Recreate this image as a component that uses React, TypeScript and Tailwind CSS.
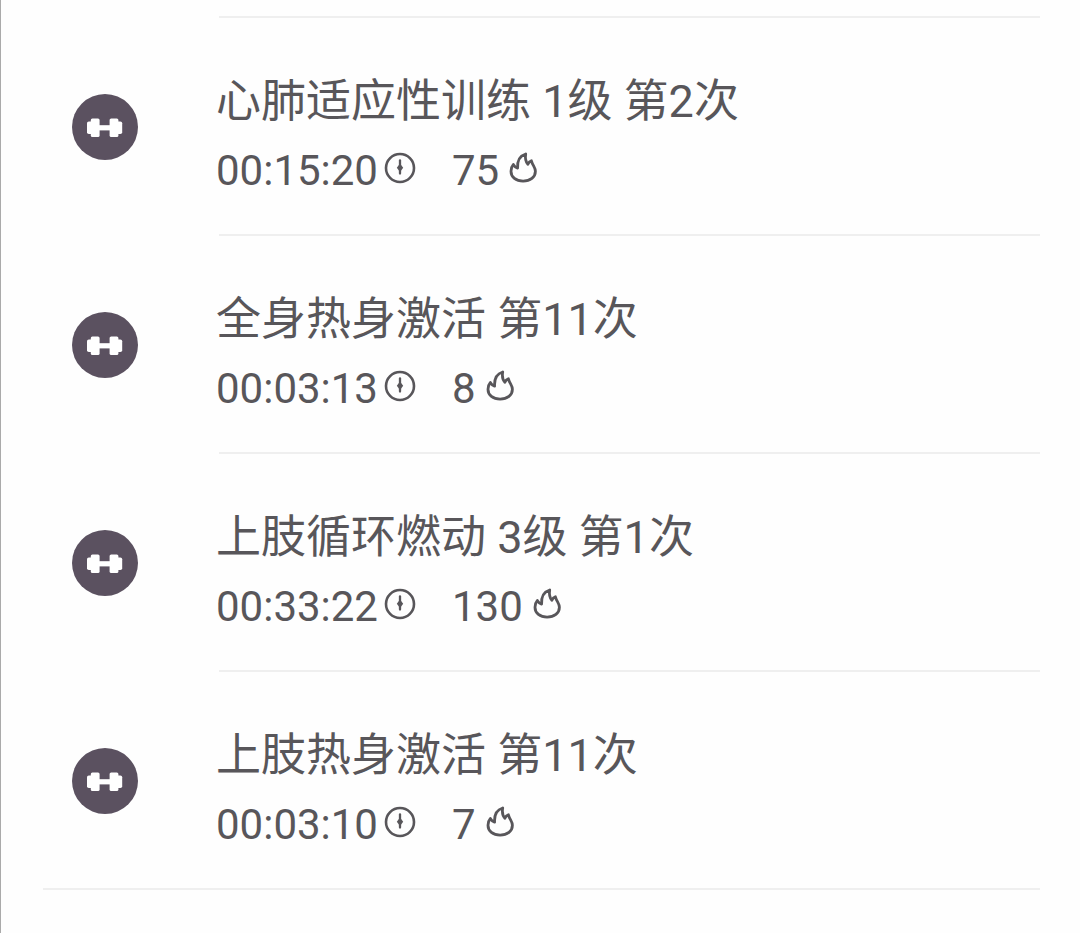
const records = [
  { title: "心肺适应性训练 1级 第2次", time: "00:15:20", calories: 75 },
  { title: "全身热身激活 第11次", time: "00:03:13", calories: 8 },
  { title: "上肢循环燃动 3级 第1次", time: "00:33:22", calories: 130 },
  { title: "上肢热身激活 第11次", time: "00:03:10", calories: 7 },
];

function DumbbellIcon() {
  return (
    <svg viewBox="0 0 66 66" className="mt-[3px] size-[66px] shrink-0" aria-hidden="true">
      <circle cx="33" cy="33" r="33" fill="#5b5160" />
      <g fill="#fff">
        <rect x="18.8" y="24.5" width="8.8" height="18.5" rx="1.6" />
        <rect x="37.6" y="24.5" width="8.8" height="18.5" rx="1.6" />
        <rect x="15" y="27.5" width="6" height="12.5" rx="1.8" />
        <rect x="44.2" y="27.5" width="6" height="12.5" rx="1.8" />
        <rect x="26" y="31.2" width="13" height="5.2" />
      </g>
    </svg>
  );
}

function ClockIcon() {
  return (
    <svg viewBox="0 0 32 32" className="mb-[6px] size-8 shrink-0" fill="none" stroke="#58565a" role="img" aria-label="时长">
      <circle cx="16" cy="16" r="14" strokeWidth="2.6" />
      <path d="M16 8.5v13" strokeWidth="2.3" strokeLinecap="round" />
      <path d="M16 11.5l3.2 4.2-3.2 4.3-3.2-4.3Z" fill="#58565a" stroke="none" />
    </svg>
  );
}

function FlameIcon() {
  return (
    <svg viewBox="0 0 32 32" className="mb-[6px] size-8 shrink-0" fill="none" stroke="#58565a" strokeWidth="2.8" strokeLinejoin="round" role="img" aria-label="千卡">
      <path d="M6.4 12.5C4.7 14.5 4 16.7 4 19.2C4 25.2 9 29.2 16.1 29.2C23.2 29.2 28.4 25.2 28.4 19.2C28.4 15.5 25.6 13.5 24.4 8.8C22.7 9.5 21.7 10.5 20.9 12.2C18.4 9.5 18 6 18.7 2C12 4 10.2 9.5 10.6 16.2C8.7 15.5 7.2 14.2 6.4 12.5Z" />
    </svg>
  );
}

export default function App() {
  return (
    <main className="min-h-screen border-l border-[#aaa] bg-[#fefefe] pt-4 pr-10 pl-[42px] font-['Roboto','Noto_Sans_CJK_SC',sans-serif] text-[#58565a]">
      <ul className="border-b-2 border-[#efefef]">
        {records.map((record) => (
          <li key={record.title} className="flex h-[218px] items-center pl-[29px]">
            <DumbbellIcon />
            <div className="ml-[78px] flex h-full min-w-0 flex-1 flex-col">
              <div className="ml-[3px] h-0.5 shrink-0 bg-[#efefef]" />
              <h2 className="mt-[52px] text-[45px] leading-[64px]">{record.title}</h2>
              <div className="flex h-[74px] items-center text-[42px] leading-[48px]">
                <span className="mr-[6px]">{record.time}</span>
                <ClockIcon />
                <span className="mr-2 ml-9">{record.calories}</span>
                <FlameIcon />
              </div>
            </div>
          </li>
        ))}
      </ul>
    </main>
  );
}
